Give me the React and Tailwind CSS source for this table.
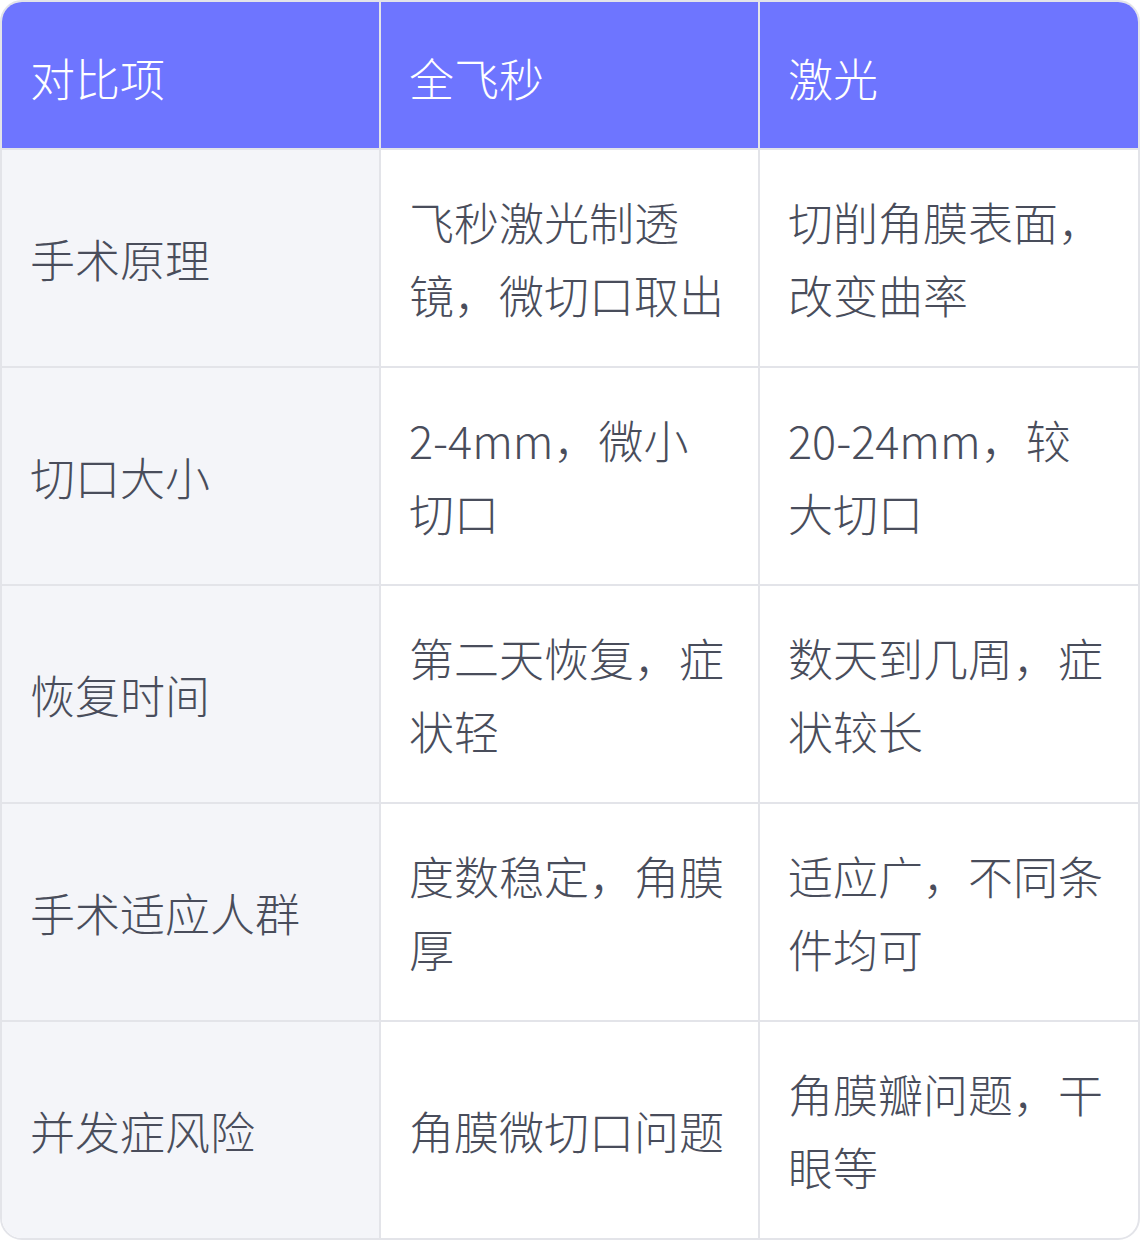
const rows = [
  ['手术原理', '飞秒激光制透镜，微切口取出', '切削角膜表面，改变曲率'],
  ['切口大小', '2-4mm，微小切口', '20-24mm，较大切口'],
  ['恢复时间', '第二天恢复，症状轻', '数天到几周，症状较长'],
  ['手术适应人群', '度数稳定，角膜厚', '适应广，不同条件均可'],
  ['并发症风险', '角膜微切口问题', '角膜瓣问题，干眼等'],
];

export default function App() {
  return (
    <div
      className="w-[1140px] h-[1240px] bg-white"
      style={{ fontFamily: '"Noto Sans CJK SC", "Noto Sans", sans-serif' }}
    >
      <div className="rounded-[22px] border-2 border-[#e3e4e9] overflow-hidden text-[45px] leading-[73px] font-light">
        <div className="grid grid-cols-[379px_379px_1fr] bg-[#6e75ff] text-white h-[146px]">
          <div className="flex items-center pl-7 pr-[30px] pt-1 border-r-2 border-[#e3e4e9]">对比项</div>
          <div className="flex items-center pl-7 pr-[30px] pt-1 border-r-2 border-[#e3e4e9]">全飞秒</div>
          <div className="flex items-center pl-7 pr-[30px] pt-1">激光</div>
        </div>
        {rows.map((r, i) => (
          <div
            key={i}
            className="grid grid-cols-[379px_379px_1fr] h-[218px] border-t-2 border-[#e3e4e9] text-[#494d5b]"
          >
            <div className="flex items-center pl-7 pr-[30px] bg-[#f4f5f9] border-r-2 border-[#e3e4e9]">{r[0]}</div>
            <div className="flex items-center pl-7 pr-[30px] border-r-2 border-[#e3e4e9]">{r[1]}</div>
            <div className="flex items-center pl-7 pr-[30px]">{r[2]}</div>
          </div>
        ))}
      </div>
    </div>
  );
}
